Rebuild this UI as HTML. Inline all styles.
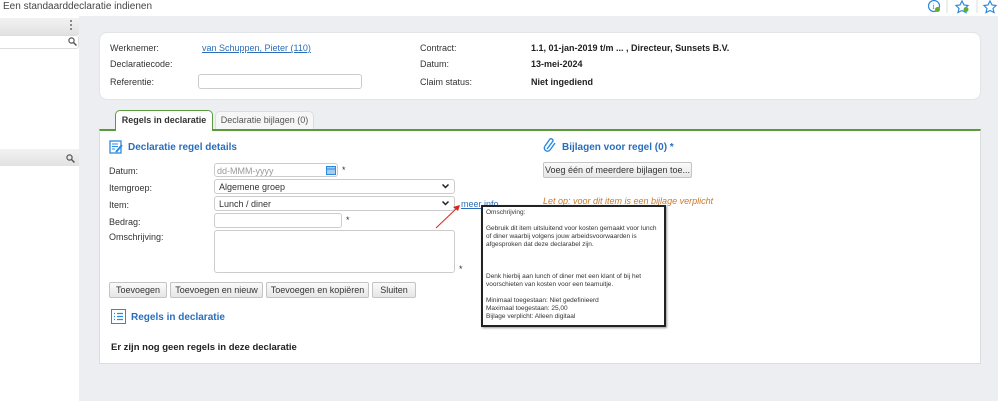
<!DOCTYPE html>
<html><head><meta charset="utf-8"><style>
*{margin:0;padding:0;box-sizing:border-box}
body{width:998px;height:401px;overflow:hidden;background:#eceef2;font-family:"Liberation Sans",sans-serif;font-size:9px;color:#333;position:relative}
.a{position:absolute}
.inp{position:absolute;background:#fff;border:1px solid #ccc;border-radius:3px}
.btn{position:absolute;height:16px;border:1px solid #c4c4c4;border-radius:2px;background:linear-gradient(#fafafa,#e6e6e6);font-size:9px;color:#333;text-align:center;line-height:14px;white-space:nowrap}
.lbl{position:absolute;font-size:9px;color:#333}
.chev{position:absolute;right:5px;top:4px}
.h{color:#2a6ebb;font-weight:bold;font-size:10px}
</style></head><body>
<div class="a" style="left:0;top:0;width:998px;height:16px;background:#fff"></div>
<div class="a" style="left:3px;top:1px;font-size:10px;color:#444">Een standaarddeclaratie indienen</div>
<svg class="a" style="left:924px;top:0" width="74" height="14">
<circle cx="10" cy="6" r="5.5" fill="none" stroke="#2a8ae0" stroke-width="1.2"/><text x="8.5" y="9" font-size="8" fill="#2a8ae0" font-family="Liberation Serif">i</text><circle cx="13.5" cy="9.5" r="2.5" fill="#5fae32"/>
<line x1="23" y1="0" x2="23" y2="13" stroke="#ddd"/>
<path d="M38 1 L40 5 L44 5.5 L41 8.5 L42 12.5 L38 10.5 L34 12.5 L35 8.5 L32 5.5 L36 5Z" fill="none" stroke="#2a8ae0" stroke-width="1.2"/><circle cx="42" cy="9.5" r="2.5" fill="#5fae32"/>
<line x1="53" y1="0" x2="53" y2="13" stroke="#ddd"/>
<path d="M66 1 L68 5 L72 5.5 L69 8.5 L70 12.5 L66 10.5 L62 12.5 L63 8.5 L60 5.5 L64 5Z" fill="none" stroke="#2a8ae0" stroke-width="1.2"/>
</svg>
<!-- sidebar -->
<div class="a" style="left:0;top:16px;width:79px;height:385px;background:#fff"></div>
<div class="a" style="left:0;top:18px;width:79px;height:17px;background:linear-gradient(#f2f2f2,#e2e2e2)"></div>
<div class="a" style="left:70px;top:20px;width:2px;height:10px;border-left:2px dotted #888"></div>
<div class="inp" style="left:-3px;top:35px;width:82px;height:14px;border-color:#ddd"></div>
<svg class="a" style="left:68px;top:37px" width="9" height="9"><circle cx="3.5" cy="3.5" r="2.6" fill="none" stroke="#555" stroke-width="1.2"/><path d="M5.5 5.5 L8.5 8.5" stroke="#555" stroke-width="1.5"/></svg>
<div class="a" style="left:0;top:149px;width:79px;height:17px;background:linear-gradient(#f2f2f2,#e2e2e2)"></div>
<svg class="a" style="left:66px;top:154px" width="9" height="9"><circle cx="3.5" cy="3.5" r="2.6" fill="none" stroke="#555" stroke-width="1.2"/><path d="M5.5 5.5 L8.5 8.5" stroke="#555" stroke-width="1.5"/></svg>
<!-- card 1 -->
<div class="a" style="left:99px;top:32px;width:882px;height:68px;background:#fff;border-radius:8px;border:1px solid #e2e4e8"></div>
<div class="lbl" style="left:110px;top:43px">Werknemer:</div>
<div class="lbl" style="left:202px;top:43px;color:#2a6ebb;text-decoration:underline">van Schuppen, Pieter (110)</div>
<div class="lbl" style="left:110px;top:59px">Declaratiecode:</div>
<div class="lbl" style="left:110px;top:77px">Referentie:</div>
<div class="inp" style="left:198px;top:74px;width:164px;height:15px"></div>
<div class="lbl" style="left:420px;top:43px">Contract:</div>
<div class="lbl" style="left:420px;top:59px">Datum:</div>
<div class="lbl" style="left:420px;top:77px">Claim status:</div>
<div class="lbl" style="left:531px;top:43px;font-weight:bold;color:#222">1.1, 01-jan-2019 t/m ... , Directeur, Sunsets B.V.</div>
<div class="lbl" style="left:531px;top:59px;font-weight:bold;color:#222">13-mei-2024</div>
<div class="lbl" style="left:531px;top:77px;font-weight:bold;color:#222">Niet ingediend</div>
<!-- tabs -->
<div class="a" style="left:99px;top:129px;width:882px;height:235px;background:#fff;border:1px solid #dcdde0;border-top:2px solid #5a9a3a"></div>
<div class="a" style="left:115px;top:110px;width:98px;height:21px;background:#fff;border:1px solid #5a9a3a;border-bottom:none;border-radius:5px 5px 0 0;font-weight:bold;text-align:center;line-height:19px">Regels in declaratie</div>
<div class="a" style="left:215px;top:111px;width:99px;height:18px;background:#f6f6f6;border:1px solid #ddd;border-bottom:none;border-radius:5px 5px 0 0;text-align:center;line-height:17px;color:#555">Declaratie bijlagen (0)</div>
<!-- left form -->
<svg class="a" style="left:109px;top:140px" width="14" height="14"><rect x="1" y="1" width="11" height="12" fill="none" stroke="#2a8ae0" stroke-width="1.3"/><path d="M3 4h6M3 6.5h6M3 9h3" stroke="#2a8ae0"/><path d="M7 12 L13 5" stroke="#2a8ae0" stroke-width="2"/></svg>
<div class="a h" style="left:128px;top:142px">Declaratie regel details</div>
<div class="lbl" style="left:109px;top:166px">Datum:</div>
<div class="inp" style="left:214px;top:163px;width:124px;height:14px"></div>
<div class="lbl" style="left:217px;top:166px;color:#999">dd-MMM-yyyy</div>
<svg class="a" style="left:326px;top:165px" width="10" height="10"><rect x="0.5" y="1.5" width="9" height="8" fill="#a8ccef" stroke="#2a8ae0"/><path d="M0 4h10" stroke="#2a8ae0"/></svg>
<div class="lbl" style="left:342px;top:165px">*</div>
<div class="lbl" style="left:109px;top:183px">Itemgroep:</div>
<div class="inp" style="left:214px;top:179px;width:241px;height:15px"><span style="position:absolute;left:4px;top:2px">Algemene groep</span><svg class="chev" width="7" height="5"><path d="M0.5 0.5 L3.5 3.5 L6.5 0.5" fill="none" stroke="#222" stroke-width="1.5"/></svg></div>
<div class="lbl" style="left:109px;top:200px">Item:</div>
<div class="inp" style="left:214px;top:196px;width:241px;height:15px"><span style="position:absolute;left:4px;top:2px">Lunch / diner</span><svg class="chev" width="7" height="5"><path d="M0.5 0.5 L3.5 3.5 L6.5 0.5" fill="none" stroke="#222" stroke-width="1.5"/></svg></div>
<div class="lbl" style="left:461px;top:199px;color:#2a6ebb;text-decoration:underline">meer info</div>
<svg class="a" style="left:434px;top:202px" width="30" height="28"><path d="M2 26 L24 5" stroke="#e02020" stroke-width="1"/><path d="M26 3 L19 5 L24 9Z" fill="#e02020"/></svg>
<div class="lbl" style="left:109px;top:217px">Bedrag:</div>
<div class="inp" style="left:214px;top:213px;width:128px;height:15px"></div>
<div class="lbl" style="left:346px;top:215px">*</div>
<div class="lbl" style="left:109px;top:232px">Omschrijving:</div>
<div class="inp" style="left:214px;top:230px;width:241px;height:43px"></div>
<div class="lbl" style="left:459px;top:264px">*</div>
<div class="btn" style="left:109px;top:282px;width:58px">Toevoegen</div>
<div class="btn" style="left:170px;top:282px;width:93px">Toevoegen en nieuw</div>
<div class="btn" style="left:266px;top:282px;width:103px">Toevoegen en kopiëren</div>
<div class="btn" style="left:372px;top:282px;width:44px">Sluiten</div>
<svg class="a" style="left:111px;top:309px" width="16" height="16"><rect x="0.5" y="0.5" width="14" height="14" fill="none" stroke="#2a8ae0"/><path d="M3 4.5h1M6 4.5h6M3 7.5h1M6 7.5h6M3 10.5h1M6 10.5h6" stroke="#2a8ae0" stroke-width="1.3"/></svg>
<div class="a h" style="left:131px;top:312px">Regels in declaratie</div>
<div class="a" style="left:111px;top:342px;font-weight:bold;font-size:9.5px;color:#222">Er zijn nog geen regels in deze declaratie</div>
<!-- right -->
<svg class="a" style="left:543px;top:137px" width="14" height="16"><path d="M4 12 L10 4 A2 2 0 0 0 7 2 L2 9 A3 3 0 0 0 7 13 L12 6" fill="none" stroke="#2a8ae0" stroke-width="1.4"/></svg>
<div class="a h" style="left:562px;top:142px">Bijlagen voor regel (0) *</div>
<div class="btn" style="left:543px;top:162px;width:149px;height:16px">Voeg één of meerdere bijlagen toe...</div>
<div class="a" style="left:543px;top:196px;font-style:italic;color:#c97a2a;font-size:9px">Let op: voor dit item is een bijlage verplicht</div>
<!-- tooltip -->
<div class="a" style="left:481px;top:205px;width:185px;height:122px;background:#fff;border:2px solid #222;box-shadow:1px 1px 2px #999;font-size:6.5px;line-height:8px;color:#333;padding:2px 3px">
<div>Omschrijving:</div><br>
<div>Gebruik dit item uitsluitend voor kosten gemaakt voor lunch of diner waarbij volgens jouw arbeidsvoorwaarden is afgesproken dat deze declarabel zijn.</div>
<br><br><br>
<div>Denk hierbij aan lunch of diner met een klant of bij het voorschieten van kosten voor een teamuitje.</div><br>
<div>Minimaal toegestaan: Niet gedefinieerd<br>Maximaal toegestaan: 25,00<br>Bijlage verplicht: Alleen digitaal</div>
</div>
</body></html>
